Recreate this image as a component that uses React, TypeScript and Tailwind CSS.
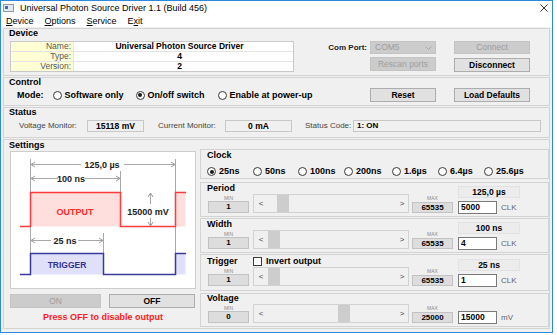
import clsx from 'clsx';

const FONT = "font-['Liberation_Sans',Arial,sans-serif]";

const deviceRows = [
  ['Name:', 'Universal Photon Source Driver'],
  ['Type:', '4'],
  ['Version:', '2'],
];

const clocks = [
  { label: '25ns', w: 'w-[46px]', on: true },
  { label: '50ns', w: 'w-[45px]' },
  { label: '100ns', w: 'w-[46px]' },
  { label: '200ns', w: 'w-[48px]' },
  { label: '1.6µs', w: 'w-[46px]' },
  { label: '6.4µs', w: 'w-[46px]' },
  { label: '25.6µs', w: 'w-[50px]' },
];

const params = [
  { label: 'Period', min: '1', max: '65535', input: '5000', unit: 'CLK', display: '125,0 µs', frac: 5000 / 65535, box: 'mt-[3px] h-[35px] pt-[1px]' },
  { label: 'Width', min: '1', max: '65535', input: '4', unit: 'CLK', display: '100 ns', frac: 4 / 65535, box: 'mt-[1px] h-[35px] pt-[1px]' },
  { label: 'Trigger', min: '1', max: '65535', input: '1', unit: 'CLK', display: '25 ns', frac: 1 / 65535, box: 'mt-[1px] h-[37px] pt-[2px]', check: true },
  { label: 'Voltage', min: '0', max: '25000', input: '15000', unit: 'mV', display: '', frac: 15000 / 25000, box: 'mt-[2px] h-[34px]' },
];

/* ─── small win32-ish controls ─────────────────────────────── */
function Radio({ checked }: { checked?: boolean }) {
  return (
    <span className="flex h-[9px] w-[9px] shrink-0 items-center justify-center rounded-full border border-[#3a3a3a] bg-white">
      {checked && <span className="h-[4px] w-[4px] rounded-full bg-[#1a1a1a]" />}
    </span>
  );
}

function Btn({ children, disabled, className }: { children: React.ReactNode; disabled?: boolean; className?: string }) {
  return (
    <div
      className={clsx(
        'flex items-center justify-center border text-[8.5px] leading-none',
        disabled ? 'border-[#c4c4c4] bg-[#cccccc] text-[#9d9d9d]' : 'border-[#adadad] bg-[#e1e1e1] font-bold text-black',
        className,
      )}
    >
      {children}
    </div>
  );
}

function Group({ title, className, children }: { title: string; className?: string; children: React.ReactNode }) {
  return (
    <div className={clsx('flex flex-col border border-[#d3d3d3]', className)}>
      <div className="h-[8px] pl-[5px] text-[9px] font-bold leading-[8px] text-black">{title}</div>
      {children}
    </div>
  );
}

/* ─── pulse diagram ────────────────────────────────────────── */
function Arrow({ x, y, dir }: { x: number; y: number; dir: 'l' | 'r' | 'u' | 'd' }) {
  const d =
    dir === 'l' ? `M${x + 4} ${y - 2.5}L${x} ${y}L${x + 4} ${y + 2.5}` :
    dir === 'r' ? `M${x - 4} ${y - 2.5}L${x} ${y}L${x - 4} ${y + 2.5}` :
    dir === 'u' ? `M${x - 2.5} ${y + 4}L${x} ${y}L${x + 2.5} ${y + 4}` :
    `M${x - 2.5} ${y - 4}L${x} ${y}L${x + 2.5} ${y - 4}`;
  return <path d={d} fill="none" stroke="#9a9a9a" strokeWidth="1" />;
}

function Diagram() {
  const g = '#a8a8a8';
  return (
    <svg width="184" height="136" viewBox="0 0 184 136" className="block">
      {/* extension lines */}
      <path d="M19.5 7V101M164.5 7V101M109.5 19V40M92.5 81V101" stroke={g} strokeWidth="1" />
      {/* 125,0 µs */}
      <path d="M20 12.5H70M113 12.5H164" stroke={g} strokeWidth="1" />
      <Arrow x={20} y={12.5} dir="l" />
      <Arrow x={164} y={12.5} dir="r" />
      <text x="91" y="15.5" textAnchor="middle" fontSize="9" fontWeight="700" fill="#222">125,0 µs</text>
      {/* 100 ns */}
      <path d="M20 26.5H47M74 26.5H109" stroke={g} strokeWidth="1" />
      <Arrow x={20} y={26.5} dir="l" />
      <Arrow x={109} y={26.5} dir="r" />
      <text x="60" y="29.5" textAnchor="middle" fontSize="9" fontWeight="700" fill="#222">100 ns</text>
      {/* output pulse */}
      <rect x="19.5" y="40.5" width="90" height="34" fill="#ffdede" />
      <rect x="164.5" y="40.5" width="10" height="34" fill="#ffdede" />
      <path d="M9 74.5H19.5V40.5H109.5V74.5H164.5V40.5H175" fill="none" stroke="#ff3b3b" strokeWidth="1.5" />
      <text x="64" y="62.5" textAnchor="middle" fontSize="9" fontWeight="700" fill="#ff2a2a">OUTPUT</text>
      <path d="M139.5 41V52M139.5 66V74" stroke={g} strokeWidth="1" />
      <Arrow x={139.5} y={41} dir="u" />
      <Arrow x={139.5} y={74} dir="d" />
      <text x="137" y="62.5" textAnchor="middle" fontSize="9" fontWeight="700" fill="#222">15000 mV</text>
      {/* 25 ns */}
      <path d="M20 88.5H40M67 88.5H92" stroke={g} strokeWidth="1" />
      <Arrow x={20} y={88.5} dir="l" />
      <Arrow x={92} y={88.5} dir="r" />
      <text x="54" y="91.5" textAnchor="middle" fontSize="9" fontWeight="700" fill="#222">25 ns</text>
      {/* trigger pulse */}
      <rect x="19.5" y="101.5" width="73" height="21" fill="#e0e0fb" />
      <rect x="164.5" y="101.5" width="10" height="21" fill="#e0e0fb" />
      <path d="M9 122.5H19.5V101.5H92.5V122.5H164.5V101.5H175" fill="none" stroke="#3a3a9a" strokeWidth="1.5" />
      <text x="56" y="116" textAnchor="middle" fontSize="8.5" fontWeight="700" fill="#33338f">TRIGGER</text>
    </svg>
  );
}

/* ─── parameter row (Period / Width / Trigger / Voltage) ────── */
function ParamRow({ p }: { p: (typeof params)[number] }) {
  return (
    <div className={clsx('flex border border-[#d3d3d3] pl-[6px]', p.box)}>
      <div className="flex w-[42px] flex-col">
        <div className="h-[9px] text-[9px] font-bold leading-[9px]">{p.label}</div>
        <div className="mt-[2px] h-[6px] pl-[1px] text-center text-[5px] leading-[6px] text-[#8a8a8a]">MIN</div>
        <div className="ml-[1px] flex h-[12px] items-center justify-center border border-[#c2c2c2] bg-[#dddddd] text-[8px] font-bold">{p.min}</div>
      </div>
      <div className="ml-[4px] flex flex-col">
        <div className="flex h-[9px] items-center">
          {p.check && (
            <>
              <span className="h-[9px] w-[9px] border border-[#3a3a3a] bg-white" />
              <span className="ml-[4px] text-[9px] font-bold leading-none">Invert output</span>
            </>
          )}
        </div>
        <div className="mt-[1px] flex h-[19px] w-[156px] border border-[#d2d2d2] bg-[#f0f0f0] text-[8px] leading-none text-[#444]">
          <div className="flex w-[14px] items-center justify-center">&lt;</div>
          <div className="relative w-[128px]">
            <div className="absolute inset-y-0 w-[12px] bg-[#cdcdcd]" style={{ left: p.frac * 116 }} />
          </div>
          <div className="flex flex-1 items-center justify-center">&gt;</div>
        </div>
      </div>
      <div className="ml-[3px] flex w-[41px] flex-col">
        <div className="mt-[11px] h-[6px] text-center text-[5px] leading-[6px] text-[#8a8a8a]">MAX</div>
        <div className="mt-[1px] flex h-[11px] items-center justify-center border border-[#c2c2c2] bg-[#dddddd] text-[8px] font-bold">{p.max}</div>
      </div>
      <div className="ml-[5px] flex flex-col">
        <div className={clsx('mt-[2px] flex h-[12px] w-[62px] items-center justify-center text-[8.5px] font-bold', p.display && 'border border-[#e2e2e2] bg-[#ececec]')}>
          {p.display}
        </div>
        <div className="mt-[2px] flex items-center">
          <div className="flex h-[13px] w-[39px] items-center border border-[#7a7a7a] bg-white pl-[2px] text-[8.5px] font-bold">{p.input}</div>
          <span className="ml-[4px] mt-[2px] text-[8px] text-[#666]">{p.unit}</span>
        </div>
      </div>
    </div>
  );
}

export default function App() {
  return (
    <div className={clsx('h-[335px] w-[557px] bg-white text-black', FONT)}>
      <div className="flex h-[333px] w-[553px] flex-col border border-[#2a8ae0]">
        {/* title bar */}
        <div className="flex h-[14px] items-center bg-white">
          <svg width="11" height="8" viewBox="0 0 11 8" className="ml-[2px]">
            <rect x="0.5" y="0.5" width="10" height="7" fill="#e4e9ef" stroke="#8c9aab" />
            <rect x="2" y="2" width="3" height="3" fill="#3d6ea8" />
          </svg>
          <span className="ml-[6px] text-[9px] leading-none">Universal Photon Source Driver 1.1 (Build 456)</span>
          <svg width="8" height="8" viewBox="0 0 8 8" className="ml-auto mr-[4px]">
            <path d="M0.5 0.5L7.5 7.5M7.5 0.5L0.5 7.5" stroke="#333" strokeWidth="1" />
          </svg>
        </div>
        {/* menu */}
        <div className="flex h-[12px] items-center gap-[11px] bg-white pl-[5px] text-[9px] leading-none">
          <span><u>D</u>evice</span>
          <span><u>O</u>ptions</span>
          <span><u>S</u>ervice</span>
          <span>E<u>x</u>it</span>
        </div>

        {/* content */}
        <div className="flex flex-1 flex-col gap-[1px] bg-[#f0f0f0] px-[2px] pt-[1px]">
          {/* Device */}
          <Group title="Device" className="h-[48px]">
            <div className="mt-[4px] flex items-start">
              <div className="ml-[6px] w-[284px] border border-[#c9c9c9] bg-white text-[8.5px] leading-none">
                {deviceRows.map(([k, v], i) => (
                  <div key={k} className={clsx('flex h-[9px]', i > 0 && 'h-[10px] border-t border-[#e4e4e4]')}>
                    <div className="flex w-[63px] items-center justify-end border-r border-[#e4e4e4] bg-[#ffffd6] pr-[2px] text-[#555]">{k}</div>
                    <div className="flex flex-1 items-center justify-center pr-[8px] font-bold">{v}</div>
                  </div>
                ))}
              </div>
              <div className="ml-auto mr-[19px] grid grid-cols-[66px_76px] gap-x-[18px] gap-y-[3px]">
                <div className="relative flex h-[13px] items-center border border-[#c4c4c4] bg-[#cccccc] pl-[4px] text-[8.5px] text-[#9d9d9d]">
                  <span className="absolute right-[68px] whitespace-nowrap text-[8px] font-bold text-[#222]">Com Port:</span>
                  COM5
                  <svg width="7" height="4" viewBox="0 0 7 4" className="ml-auto mr-[3px]">
                    <path d="M0.5 0.5L3.5 3.5L6.5 0.5" fill="none" stroke="#a8a8a8" />
                  </svg>
                </div>
                <Btn disabled className="h-[13px]">Connect</Btn>
                <Btn disabled className="h-[14px]">Rescan ports</Btn>
                <Btn className="mt-[1px] h-[14px]">Disconnect</Btn>
              </div>
            </div>
          </Group>

          {/* Control */}
          <Group title="Control" className="h-[29px]">
            <div className="mt-[2px] flex items-center text-[9px] font-bold leading-none">
              <span className="ml-[13px]">Mode:</span>
              <span className="ml-[9px] flex items-center gap-[3px]"><Radio /> Software only</span>
              <span className="ml-[12px] flex items-center gap-[3px]"><Radio checked /> On/off switch</span>
              <span className="ml-[13px] flex items-center gap-[3px]"><Radio /> Enable at power-up</span>
              <div className="ml-auto mr-[19px] flex gap-[18px]">
                <Btn className="h-[14px] w-[66px]">Reset</Btn>
                <Btn className="h-[14px] w-[76px]">Load Defaults</Btn>
              </div>
            </div>
          </Group>

          {/* Status */}
          <Group title="Status" className="h-[31px]">
            <div className="mt-[4px] flex items-center text-[8px] leading-none text-[#444]">
              <span className="w-[83px] pl-[15px]">Voltage Monitor:</span>
              <div className="flex h-[12px] w-[57px] items-center justify-center border border-[#c8c8c8] bg-[#f0f0f0] text-[8.5px] font-bold text-black">15118 mV</div>
              <span className="w-[81px] pl-[14px]">Current Monitor:</span>
              <div className="flex h-[12px] w-[67px] items-center justify-center border border-[#c8c8c8] bg-[#f0f0f0] text-[8.5px] font-bold text-black">0 mA</div>
              <span className="w-[61px] pl-[13px]">Status Code:</span>
              <div className="flex h-[12px] w-[188px] items-center border border-[#c8c8c8] bg-[#f0f0f0] pl-[3px] text-[8px] font-bold text-black">1: ON</div>
            </div>
          </Group>

          {/* Settings */}
          <div className="flex h-[190px] flex-col border border-[#d3d3d3] pt-[1px]">
            <div className="h-[8px] pl-[5px] text-[9px] font-bold leading-[8px]">Settings</div>
            <div className="flex">
              <div className="ml-[6px] mt-[2px] flex w-[186px] flex-col">
                <div className="h-[138px] border border-[#cdcdcd] bg-white">
                  <Diagram />
                </div>
                <div className="mt-[5px] flex gap-[8px]">
                  <Btn disabled className="h-[14px] w-[91px]">ON</Btn>
                  <Btn className="h-[14px] w-[86px]">OFF</Btn>
                </div>
                <div className="mt-[5px] text-center text-[9px] font-bold leading-[9px] text-[#ff1a1a]">Press OFF to disable output</div>
              </div>

              <div className="ml-[4px] flex w-[349px] flex-col">
                <div className="flex h-[30px] flex-col border border-[#d3d3d3] pt-[1px]">
                  <div className="pl-[6px] text-[9px] font-bold leading-[9px]">Clock</div>
                  <div className="mt-[7px] flex pl-[6px] text-[9px] font-bold leading-none">
                    {clocks.map((c) => (
                      <span key={c.label} className={clsx('flex items-center gap-[3px]', c.w)}>
                        <Radio checked={c.on} />
                        {c.label}
                      </span>
                    ))}
                  </div>
                </div>
                {params.map((p) => (
                  <ParamRow key={p.label} p={p} />
                ))}
              </div>
            </div>
          </div>
        </div>
      </div>
    </div>
  );
}
